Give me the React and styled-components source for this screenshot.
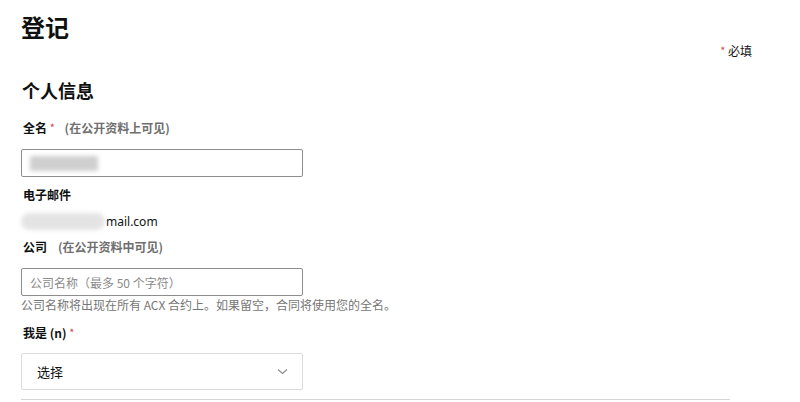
import React from "react";
import styled, { createGlobalStyle } from "styled-components";

const GlobalStyle = createGlobalStyle`
  html, body { margin: 0; padding: 0; background: #fff; }
  body { font-family: "Noto Sans", "Noto Sans CJK SC", sans-serif; color: #0f1111; }
  * { box-sizing: border-box; }
`;

const Page = styled.div`
  width: 800px;
  height: 402px;
  overflow: hidden;
  padding: 11px 0 0 21px;
`;

const Header = styled.div`
  display: flex;
  flex-direction: column;
  padding-right: 48px;
`;

const Title = styled.h1`
  margin: 0;
  font-family: "Noto Sans CJK SC", sans-serif;
  font-size: 24px;
  line-height: 32px;
  font-weight: 700;
  color: #0f1111;
`;

const RequiredNote = styled.div`
  align-self: flex-end;
  margin-top: -1px;
  font-family: "Noto Sans CJK SC", sans-serif;
  font-size: 12px;
  line-height: 18px;
  color: #0f1111;
`;

const Star = styled.span`
  color: #d9534f;
  font-size: 9px;
  margin-right: ${(p) => p.$mr || 0}px;
  margin-left: ${(p) => p.$ml || 0}px;
  vertical-align: 2px;
  font-weight: 700;
`;

const Section = styled.div`
  width: 709px;
  display: flex;
  flex-direction: column;
`;

const SectionTitle = styled.h2`
  margin: 17px 0 0 1px;
  font-family: "Noto Sans CJK SC", sans-serif;
  font-size: 18px;
  line-height: 26px;
  font-weight: 700;
  color: #0f1111;
`;

const Label = styled.div`
  margin-top: ${(p) => p.$mt || 0}px;
  padding-left: 2px;
  font-family: "Noto Sans CJK SC", sans-serif;
  font-size: 12px;
  line-height: 18px;
  font-weight: 700;
  color: #0f1111;
`;

const Hint = styled.span`
  color: #6f6f6f;
  font-weight: 700;
  margin-left: ${(p) => p.$gap}px;
`;

const TextBox = styled.div`
  margin-top: ${(p) => p.$mt || 0}px;
  width: 282px;
  height: 28px;
  border: 1px solid #8d8d8d;
  border-radius: 2px;
  display: flex;
  align-items: center;
  padding: 0 8px;
  font-family: "Noto Sans CJK SC", sans-serif;
  font-size: 12px;
  color: #8a8a8a;
`;

const Redacted = styled.span`
  display: inline-block;
  width: ${(p) => p.$w}px;
  height: ${(p) => p.$h}px;
  background: ${(p) => p.$bg};
  border-radius: ${(p) => p.$r}px;
  filter: blur(2px);
`;

const EmailRow = styled.div`
  margin-top: 8px;
  display: flex;
  align-items: center;
  gap: 1px;
  height: 18px;
  font-family: "Noto Sans", "Noto Sans CJK SC", sans-serif;
  font-size: 12px;
  color: #0f1111;
`;

const Helper = styled.div`
  font-family: "Noto Sans CJK SC", sans-serif;
  font-size: 12px;
  line-height: 18px;
  color: #767676;
`;

const SelectBox = styled.div`
  margin-top: 11px;
  width: 282px;
  height: 37px;
  border: 1px solid #dcdcdc;
  border-radius: 2px;
  display: flex;
  align-items: center;
  justify-content: space-between;
  padding: 0 14px 0 15px;
  font-family: "Noto Sans CJK SC", sans-serif;
  font-size: 13px;
  color: #0f1111;
`;

const Divider = styled.div`
  margin-top: 9px;
  width: 709px;
  height: 1px;
  background: #d5d5d5;
`;

export default function App() {
  return (
    <>
      <GlobalStyle />
      <Page>
        <Header>
          <Title>登记</Title>
          <RequiredNote>
            <Star $mr={3}>*</Star>必填
          </RequiredNote>
        </Header>
        <Section>
          <SectionTitle>个人信息</SectionTitle>
          <Label $mt={16}>
            全名<Star $ml={3}>*</Star>
            <Hint $gap={10}>(在公开资料上可见)</Hint>
          </Label>
          <TextBox $mt={12}>
            <Redacted $w={68} $h={15} $bg="#cfcfcf" $r={1} />
          </TextBox>
          <Label $mt={9}>电子邮件</Label>
          <EmailRow>
            <Redacted $w={84} $h={17} $bg="#e4e4e4" $r={9} />
            <span>mail.com</span>
          </EmailRow>
          <Label $mt={8}>
            公司<Hint $gap={11}>(在公开资料中可见)</Hint>
          </Label>
          <TextBox $mt={12}>公司名称（最多 50 个字符）</TextBox>
          <Helper>公司名称将出现在所有 ACX 合约上。如果留空，合同将使用您的全名。</Helper>
          <Label $mt={10}>
            我是 (n)<Star $ml={3}>*</Star>
          </Label>
          <SelectBox>
            <span>选择</span>
            <svg width="11" height="7" viewBox="0 0 11 7" fill="none">
              <path d="M1 1.5 L5.5 5.5 L10 1.5" stroke="#8a8a8a" strokeWidth="1.1" />
            </svg>
          </SelectBox>
          <Divider />
        </Section>
      </Page>
    </>
  );
}
